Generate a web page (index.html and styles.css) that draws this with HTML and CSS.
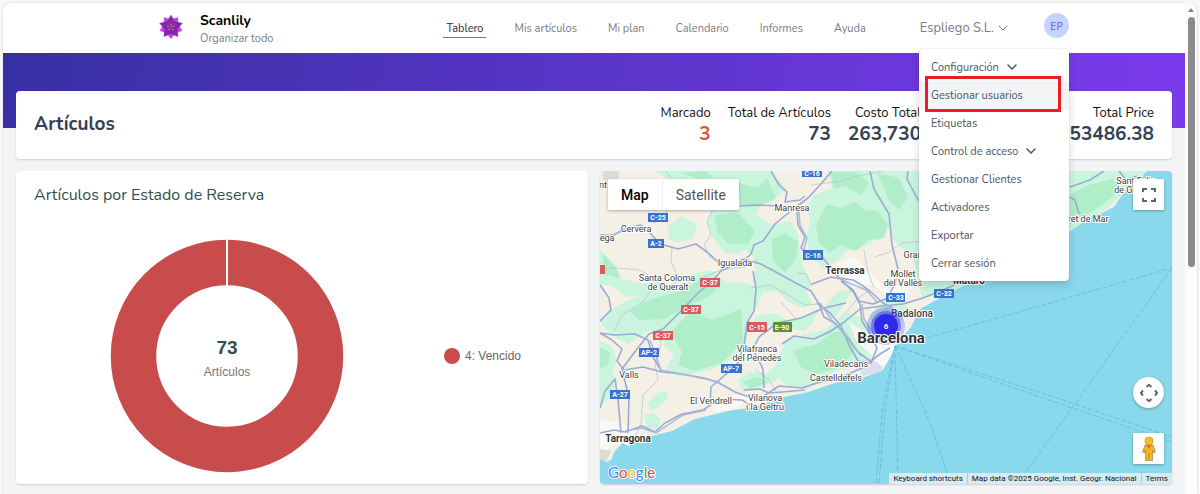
FILE: index.html
```html
<!DOCTYPE html>
<html lang="es">
<head>
<meta charset="utf-8">
<meta name="viewport" content="width=device-width, initial-scale=1">
<title>Scanlily</title>
<link rel="stylesheet" href="styles.css">
</head>
<body>
<div class="frame">
  <div class="page">
    <header class="topbar">
      <a class="brand" href="#">
        <svg class="brand-logo" viewBox="-12 -12 24 24" aria-hidden="true">
          <g fill="#c840f5">
            <path d="M0 12 L-4 7 L-2 0 L2 0 L4 7Z"/>
            <path d="M0 12 L-4 7 L-2 0 L2 0 L4 7Z" transform="rotate(72)"/>
            <path d="M0 12 L-4 7 L-2 0 L2 0 L4 7Z" transform="rotate(144)"/>
            <path d="M0 12 L-4 7 L-2 0 L2 0 L4 7Z" transform="rotate(216)"/>
            <path d="M0 12 L-4 7 L-2 0 L2 0 L4 7Z" transform="rotate(288)"/>
          </g>
          <g fill="#8128a8" stroke="#9331ba" stroke-width=".3">
            <path d="M0 -12 L-4 -5.500 L-2 0 L2 0 L4 -5.500Z"/>
            <path d="M0 -12 L-4 -5.500 L-2 0 L2 0 L4 -5.500Z" transform="rotate(72)"/>
            <path d="M0 -12 L-4 -5.500 L-2 0 L2 0 L4 -5.500Z" transform="rotate(144)"/>
            <path d="M0 -12 L-4 -5.500 L-2 0 L2 0 L4 -5.500Z" transform="rotate(216)"/>
            <path d="M0 -12 L-4 -5.500 L-2 0 L2 0 L4 -5.500Z" transform="rotate(288)"/>
          </g>
          <path d="M0 0V-3M0 0L3 -1M0 0L2 2.500M0 0L-2 2.500M0 0L-3 -1" stroke="#c76a86" stroke-width=".4"/>
          <g fill="#f7c64a"><circle cy="-3" r=".6"/><circle cx="3" cy="-1" r=".6"/><circle cx="2" cy="2.500" r=".6"/><circle cx="-2" cy="2.500" r=".6"/><circle cx="-3" cy="-1" r=".6"/></g>
        </svg>
        <span class="brand-text"><strong>Scanlily</strong><small>Organizar todo</small></span>
      </a>
      <nav class="nav">
        <a class="nav-link is-active" href="#">Tablero</a>
        <a class="nav-link" href="#">Mis artículos</a>
        <a class="nav-link" href="#">Mi plan</a>
        <a class="nav-link" href="#">Calendario</a>
        <a class="nav-link" href="#">Informes</a>
        <a class="nav-link" href="#">Ayuda</a>
      </nav>
      <div class="account">
        <button class="account-btn" type="button">Espliego S.L.
          <svg class="chev" viewBox="0 0 10 6" aria-hidden="true"><path d="M1 1l4 4 4-4"/></svg>
        </button>
        <button class="avatar" type="button">EP</button>
        <div class="menu">
          <button class="menu-item" type="button">Configuración
            <svg class="chev" viewBox="0 0 10 6" aria-hidden="true"><path d="M1 1l4 4 4-4"/></svg></button>
          <a class="menu-item is-hover" href="#">Gestionar usuarios</a>
          <a class="menu-item" href="#">Etiquetas</a>
          <button class="menu-item" type="button">Control de acceso
            <svg class="chev" viewBox="0 0 10 6" aria-hidden="true"><path d="M1 1l4 4 4-4"/></svg></button>
          <a class="menu-item" href="#">Gestionar Clientes</a>
          <a class="menu-item" href="#">Activadores</a>
          <a class="menu-item" href="#">Exportar</a>
          <a class="menu-item" href="#">Cerrar sesión</a>
          <div class="highlight"></div>
        </div>
      </div>
    </header>
    <div class="band"></div>
    <main class="content">
      <section class="card summary">
        <h1 class="summary-title">Artículos</h1>
        <dl class="stats">
          <div class="stat"><dt>Marcado</dt><dd class="is-red">3</dd></div>
          <div class="stat"><dt>Total de Artículos</dt><dd>73</dd></div>
          <div class="stat"><dt>Costo Total</dt><dd>263,730</dd></div>
          <div class="stat stat-last"><dt>Total Price</dt><dd>153486.38</dd></div>
        </dl>
      </section>
      <div class="panels">
        <section class="card chart">
          <h2 class="chart-title">Artículos por Estado de Reserva</h2>
          <div class="chart-body">
            <svg class="donut" viewBox="0 0 234 234" role="img" aria-label="73 Artículos">
              <circle cx="117" cy="117" r="93.500" fill="none" stroke="#c74c4b" stroke-width="45.500"/>
              <path d="M117 0V48" stroke="#fff" stroke-width="2"/>
              <text class="donut-num" x="117" y="115">73</text>
              <text class="donut-label" x="117" y="137">Artículos</text>
            </svg>
            <div class="legend"><span class="dot"></span>4: Vencido</div>
          </div>
        </section>
        <section class="card map">
          <svg class="map-svg" viewBox="600 172 572 313" preserveAspectRatio="xMidYMid slice">
            <rect x="600" y="172" width="572" height="313" fill="#8ad8eb"/>
            <clipPath id="land"><path d="M600 172H1147L1142 178L1134 184L1122 196L1114 208L1102 214L1090 218L1072 231L1040 252L1010 270L987 280L963 287L940 299L920 310L911 328L902 338L895 348L888 362L883 371L876 374L865 378L835 384L805 394L788 397L755 408L728 412L695 420L672 432L652 437L638 442L629 447L622 444L615 452L611 461L607 463L600 460Z"/></clipPath>
            <g clip-path="url(#land)">
              <rect x="600" y="172" width="572" height="313" fill="#f5f0e6"/>
              <g fill="#c9f4de">
                <path d="M655 172L770 172L780 182L786 190L774 201L762 206L755 215L772 226L790 222L798 235L800 252L803 268L812 285L806 292L792 290L772 280L757 273L752 256L744 251L737 256L724 253L713 239L708 224L711 212L740 211L739 181L668 180Z"/>
                <path d="M828 172H1147L1130 188L1106 210L1065 235L1020 270L968 288L922 300L914 262L893 240L890 226L883 240L873 242L862 249L846 252L838 262L824 270L812 258L806 238L810 224L807 208L814 196L832 189Z"/>
                <path d="M668 227L682 217L697 226L693 239L678 244L669 240Z"/>
                <path d="M600 251L612 262L622 280L644 285L660 279L670 289L650 296L627 298L610 286L600 287Z"/>
                <path d="M607 314L624 303L640 297L663 291L680 285L690 276L711 271L727 284L744 283L757 288L755 303L750 317L746 347L735 359L712 370L680 378L666 370L674 356L664 347L667 331L646 333L628 345L611 336L600 323Z"/>
                <path d="M755 260L771 272L789 284L806 292L813 305L803 309L789 303L777 292L763 293L755 312Z"/>
                <path d="M755 318L775 314L788 322L804 318L820 309L813 323L804 332L788 329L772 327L755 327Z"/>
                <path d="M600 342L612 347L617 362L612 372L618 383L608 400L600 409Z"/>
                <path d="M647 404L656 395L665 391L668 399L660 407L652 412ZM644 416L654 414L661 420L658 430L647 429Z"/>
                <path d="M738 381L749 373L767 374L775 367L786 342L803 336L826 330L845 313L863 319L874 332L866 345L876 356L853 367L826 376L807 390L788 388L779 380L762 388L743 393Z"/>
                <path d="M870 316L880 305L892 301L902 304L911 311L906 325L893 333L876 334ZM925 296L936 283L951 278L970 279L958 288L936 298ZM826 306L837 293L852 291L845 304L838 315L829 321Z"/>
              </g>
              <g fill="#b0edc9">
                <path d="M680 174L704 172L714 178L700 180ZM739 184L758 189L767 179L776 199L758 208L740 207Z"/>
                <path d="M816 226L827 205L841 209L855 203L864 211L878 212L888 226L883 239L868 241L856 252L841 246L829 254L819 243Z"/>
                <path d="M772 240L785 234L798 243L796 260L785 274L773 262ZM714 216L738 214L755 232L748 245L728 245L718 234Z"/>
                <path d="M831 173L856 173L869 184L861 196L845 187L834 190ZM877 174L899 179L908 198L899 211L889 201Z"/>
                <path d="M671 333L690 313L712 321L741 310L743 342L721 364L694 372L678 366L682 353Z"/>
                <path d="M630 312L651 300L684 291L706 277L720 286L707 299L689 306L664 320L639 321Z"/>
                <path d="M793 351L817 345L833 333L847 333L856 350L840 368L817 375L801 368Z"/>
                <path d="M600 348L611 354L607 367L600 369ZM743 383L758 378L768 383L750 390ZM1070 195L1089 186L1113 180L1120 191L1101 207L1070 225ZM603 255L616 268L620 279L603 275ZM871 322L887 308L896 319L887 330Z"/>
              </g>
              <g fill="#f8f8f6" opacity=".9">
                <path d="M837 264L854 258L872 276L889 291L912 281L905 304L886 295L872 286L854 289L845 279ZM848 322L865 333L882 337L900 323L909 312L903 338L890 361L880 370L872 357L857 343ZM713 404L735 396L755 399L735 409L716 414ZM600 421L620 423L638 431L630 445L614 446L600 456Z"/>
              </g>
              <path d="M858 364L870 359L883 368L878 374L862 377Z" fill="#d9def0"/>
              <path d="M603 172H619V184L603 181ZM600 450L611 452L606 463L600 462Z" fill="#dcdcd4"/>
              <g class="minor">
                <path d="M665 172L673 180L668 210L660 222L653 224M713 210L707 222L711 236L704 246L710 258L721 265M672 249L671 263L678 278L673 287M600 270L617 269L640 271L653 279M614 332L622 316L643 303L651 291L671 286M701 279L721 271L745 268L758 261M659 330L661 346L655 366L658 381L643 396L641 424L634 440M811 186L835 183L858 177L883 172M875 258L889 253L902 244L925 242M751 289L770 286L790 297L805 306L819 305M781 303L796 320M864 251L868 273L874 289M755 370L770 382L776 392M847 313L856 301L871 290M812 287L806 275L798 274"/>
              </g>
              <g class="road">
                <path d="M600 236L612 237L626 229L641 226L650 234L660 245L678 250L696 245L707 253L718 263L730 266L744 260L761 265L774 272L794 283L811 292L819 305L824 318L836 325L848 339L858 353L870 362"/>
                <path d="M742 263L751 255L754 246L763 242L775 225L792 211L808 199L820 186L832 172"/>
                <path d="M771 172L779 186L787 193L785 203L800 201L805 197M755 206L780 207L796 211M740 207L755 206"/>
                <path d="M797 211L798 226L805 238L801 249L808 257L822 258L832 270L839 279L853 281L863 287L872 294L883 304L900 313"/>
                <path d="M870 172L874 190L889 215L892 246L898 270L895 284L888 299L873 305L859 302L853 291L841 282"/>
                <path d="M908 172L907 180L917 199L925 210L934 227"/>
                <path d="M812 285L831 278L841 280L854 294L860 305L862 322L869 333L877 349L871 364L858 362L849 346L841 327L830 314L817 304"/>
                <path d="M600 334L614 336L635 335L648 341L653 358L662 373L682 375L704 379L719 384L735 393L758 401L779 387L802 389L817 384L844 377L862 369L880 355L890 349"/>
                <path d="M662 373L643 368L624 371L617 362L622 350L612 341L600 334"/>
                <path d="M600 434L614 431L625 433L642 427L655 433L665 424L682 415L703 411L720 400L742 401L752 407"/>
                <path d="M628 434L629 399L622 370L637 350L649 335L663 330L678 315L696 296L713 281L721 272L733 266"/>
                <path d="M621 434L618 400L615 380L605 392L600 409M600 322L611 311L609 299L600 286"/>
                <path d="M710 406L711 388L725 376L738 364L744 347L747 324L754 312L756 290L753 272"/>
                <path d="M744 391L760 390L769 394L782 393L805 391M764 389L763 370L753 350L759 338L777 324L801 319L824 309L846 304"/>
                <path d="M782 345L794 337L814 340L829 333L843 324L860 310L882 307L903 305L923 299L950 288L966 280"/>
                <path d="M1070 188L1090 181L1104 172M1070 198L1075 201L1079 215M1119 172L1126 181L1137 177"/>
              </g>
              <g class="road-hi"><path d="M602 236L613 236L629 229M799 212L800 226L807 239L804 250L811 260M820 304L831 320L844 335L861 357M840 280L866 291L878 304M650 341L661 371L720 383M625 432L642 429L656 434L683 416L706 411M862 305L864 320L879 343"/></g>
            </g>
            <g fill="none" stroke="#66c3dc" stroke-width="1" stroke-dasharray="5 2">
              <path d="M895 347L882 412L876 485M895 347L885 412L879 485M895 347L898 485M895 347L929 421L951 485M895 347L1040 398L1172 443M895 347L1045 395L1172 438M920 341L1040 307L1172 269M1172 269L1080 398L1017 485"/>
            </g>
            <g class="shields">
              <g fill="#3973cf"><rect x="802" y="166" width="20" height="12"/><rect x="648" y="214" width="20" height="9"/><rect x="648" y="240" width="16" height="9"/><rect x="803" y="251" width="20" height="10"/><rect x="886" y="294" width="19" height="9"/><rect x="934" y="290" width="20" height="9"/><rect x="639" y="349" width="20" height="9"/><rect x="721" y="365" width="21" height="9"/><rect x="610" y="391" width="20" height="9"/></g>
              <g fill="#d95b60"><rect x="700" y="279" width="20" height="9"/><rect x="681" y="306" width="20" height="9"/><rect x="653" y="332" width="20" height="9"/><rect x="747" y="323" width="20" height="10"/><rect x="596" y="266" width="9" height="9"/></g>
              <rect x="773" y="323" width="19" height="10" fill="#598f35"/>
              <text x="812" y="177">C-16</text><text x="658" y="221">C-25</text><text x="656" y="247">A-2</text><text x="813" y="259">C-16</text><text x="896" y="301">C-33</text><text x="944" y="297">C-32</text><text x="649" y="356">AP-2</text><text x="731" y="372">AP-7</text><text x="620" y="398">A-27</text><text x="710" y="286">C-37</text><text x="691" y="313">C-37</text><text x="663" y="339">C-37</text><text x="757" y="331">C-15</text><text x="782" y="331">E-90</text>
            </g>
            <g class="places">
              <text x="603" y="189">nt</text><text x="636" y="233">Cervera</text><text x="607" y="242">ega</text>
              <text x="735" y="267">Igualada</text><text x="667" y="282">Santa Coloma</text><text x="668" y="291">de Queralt</text>
              <text x="792" y="212">Manresa</text><text x="924" y="259">Granollers</text><text x="903" y="278">Mollet</text><text x="903" y="287">del Vallès</text>
              <text class="mid" x="845" y="275">Terrassa</text><text class="mid" x="969" y="285">Mataró</text>
              <text class="semi" x="912" y="318">Badalona</text>
              <text x="757" y="353">Vilafranca</text><text x="757" y="362">del Penedès</text><text x="629" y="379">Valls</text>
              <text x="711" y="405">El Vendrell</text><text x="765" y="402">Vilanova</text><text x="765" y="411">i la Geltrú</text>
              <text x="846" y="368">Viladecans</text><text x="836" y="382">Castelldefels</text>
              <text class="mid" x="628" y="443">Tarragona</text>
              <text x="1136" y="185">Sant Feliu</text><text x="1135" y="194">de Guíxols</text><text x="1082" y="223">Lloret de Mar</text>
            </g>
            <g fill="#2f29f0"><circle cx="886" cy="327" r="19" opacity=".25"/><circle cx="886" cy="327" r="15" opacity=".45"/><circle cx="886" cy="327" r="12"/></g>
            <text class="cluster" x="886" y="330">6</text>
            <g class="places"><text class="big" x="891" y="344">Barcelona</text></g>
            <text class="google" x="608" y="479"><tspan fill="#4285f4">G</tspan><tspan fill="#ea4335">o</tspan><tspan fill="#fbbc05">o</tspan><tspan fill="#4285f4">g</tspan><tspan fill="#34a853">l</tspan><tspan fill="#ea4335">e</tspan></text>
          </svg>
          <div class="map-type"><button class="type-btn is-on" type="button">Map</button><button class="type-btn" type="button">Satellite</button></div>
          <button class="map-ctl map-full" type="button" aria-label="Pantalla completa"><svg viewBox="0 0 18 18" aria-hidden="true"><path d="M3 6V3h4M11 3h4v3M15 12v3h-4M7 15H3v-3"/></svg></button>
          <div class="map-side">
            <button class="map-ctl map-pan" type="button" aria-label="Mover mapa"><svg viewBox="0 0 18 18" aria-hidden="true"><path d="M6.500 3L9 .8 11.500 3M6.500 15L9 17.200 11.500 15M3 6.500L.8 9 3 11.500M15 6.500L17.200 9 15 11.500"/></svg></button>
            <button class="map-ctl map-man" type="button" aria-label="Street View"><svg viewBox="0 0 14 26" aria-hidden="true"><path d="M3 9H11L13.500 16L11.500 17L10.500 14V24.500H3.500V14L2.500 17L.5 16Z" fill="#f8b51c" stroke="#9a8461" stroke-width=".7"/><path d="M4 9H10L7 13Z" fill="#e5762b" stroke="none"/><circle cx="7" cy="5" r="4" fill="#fbbd24" stroke="#a58645" stroke-width=".6"/><path d="M7 17v7" stroke="#cc8222"/></svg></button>
          </div>
          <div class="map-legal"><button type="button">Keyboard shortcuts</button><span>Map data ©2025 Google, Inst. Geogr. Nacional</span><a href="#">Terms</a></div>
        </section>
      </div>
    </main>
  </div>
  <div class="scroll" aria-hidden="true"><span class="scroll-up"></span><span class="scroll-thumb"></span></div>
</div>
</body>
</html>
```
FILE: styles.css
```css
* { box-sizing: border-box; }
body { margin: 0; background: #f7f7f7; color: #111; font-family: Nunito, Lato, sans-serif; font-size: 11px; }
button { margin: 0; padding: 0; border: 0; background: none; font: inherit; color: inherit; cursor: pointer; }
a { color: inherit; text-decoration: none; }
h1, h2, dl, dd { margin: 0; }

.frame { display: flex; min-height: 100vh; padding: 3px 3px 0; }
.page { flex: 1; min-width: 0; background: #f3f4f6; border-radius: 8px 0 0 0; box-shadow: 0 0 2px #ccc; }

.topbar { display: flex; align-items: flex-start; justify-content: space-between; height: 50px; padding: 0 116px 0 156px; background: #fff; border-radius: 8px 0 0 0; }
.brand { display: flex; gap: 17px; padding-top: 9px; }
.brand-logo { width: 24px; height: 24px; margin-top: 3px; }
.brand-text { display: flex; flex-direction: column; }
.brand-text strong { color: #000; font-size: 14px; line-height: 18px; }
.brand-text small { color: #7b808a; font-size: 11px; line-height: 18px; }
.nav { display: flex; gap: 25px; padding: 17px 0 0 119px; color: #777d87; }
.nav-link { padding: 0 3px; line-height: 17px; border-bottom: 1px solid transparent; }
.nav-link.is-active { color: #1f2937; border-color: #6366f1; }
.account { position: relative; display: flex; gap: 36px; }
.account-btn { display: flex; align-items: center; gap: 4px; height: 50px; color: #777d87; font-size: 13px; }
.chev { width: 10px; height: 6px; fill: none; stroke: currentColor; stroke-width: 1; stroke-linecap: round; stroke-linejoin: round; }
.avatar { width: 25px; height: 25px; margin-top: 10px; border-radius: 50%; background: #c7d2fe; color: #6366f1; font: 11px "Open Sans", sans-serif; }
.menu { position: absolute; z-index: 2; top: 46px; right: 0; width: 150px; padding: 4px 0; background: #fff; border-radius: 4px; box-shadow: 0 4px 8px rgba(0, 0, 0, .15), 0 0 1px rgba(0, 0, 0, .3); color: #4b5563; }
.menu-item { display: flex; align-items: center; gap: 8px; width: 100%; height: 28px; padding: 0 12px; }
.menu-item .chev { stroke-width: 1.5; }
.menu-item.is-hover { background: #f3f4f6; }
.highlight { position: absolute; top: 27px; left: 6px; right: 8px; height: 36px; border: 3px solid #ed1c24; }

.band { height: 75px; background: linear-gradient(100deg, #3730a3, #7c3aed); }
.content { position: relative; margin-top: -37px; padding: 0 13px 9px; }
.card { background: #fff; border-radius: 4px; box-shadow: 0 1px 2px rgba(0, 0, 0, .15); }
.summary { display: flex; align-items: center; justify-content: space-between; height: 68px; padding: 0 18px 2px; }
.summary-title { color: #334155; font-size: 19px; font-weight: 700; }
.stats { display: flex; gap: 17px; text-align: right; }
.stat dt { font-size: 13px; line-height: 20px; }
.stat dd { color: #334155; font-size: 19px; font-weight: 700; line-height: 22px; }
.stat dd.is-red { color: #d65745; }
.stat-last { margin-left: 120px; }

.panels { display: grid; grid-template-columns: 1fr 1fr; gap: 12px; margin-top: 12px; }
.chart { height: 313px; padding: 14px 18px; }
.chart-title { color: #2f4f4f; font-size: 16px; font-weight: 400; line-height: 20px; }
.chart-body { display: flex; align-items: center; gap: 100px; padding: 34px 0 0 76px; }
.donut { width: 234px; height: 234px; }
.donut text { font-family: "Liberation Sans", Arial, sans-serif; text-anchor: middle; }
.donut-num { fill: #2f4f4f; font-size: 19px; font-weight: 700; }
.donut-label { fill: #757575; font-size: 12px; }
.legend { display: flex; align-items: center; gap: 5px; color: #666; font: 12px "Liberation Sans", Arial, sans-serif; }
.dot { width: 16px; height: 16px; border-radius: 50%; background: #c74c4b; }

.map { position: relative; height: 313px; overflow: hidden; font-family: Roboto, sans-serif; }
.map-svg { display: block; width: 100%; height: 100%; font-family: Roboto, sans-serif; }
.road { fill: none; stroke: #9aacd2; stroke-width: 1.6; stroke-linejoin: round; }
.road-hi { fill: none; stroke: #a9b8d9; stroke-width: 1.4; }
.minor { fill: none; stroke: #b9c4d8; stroke-width: .8; stroke-linejoin: round; }
.shields text { fill: #fff; font-size: 7px; font-weight: 700; text-anchor: middle; }
.places { fill: #3c4043; font-size: 9px; text-anchor: middle; stroke: #fff; stroke-width: 2px; stroke-linejoin: round; paint-order: stroke; }
.places .semi { font-size: 10px; font-weight: 500; }
.places .mid { fill: #333; font-size: 10px; font-weight: 700; }
.places .big { fill: #333; font-size: 15px; font-weight: 700; }
.cluster { fill: #fff; font-size: 8px; font-weight: 700; text-anchor: middle; }
.google { font-family: Lato, sans-serif; font-size: 15px; font-weight: 400; stroke: #fff; stroke-width: 2px; paint-order: stroke; }
.map-type { position: absolute; top: 8px; left: 8px; display: flex; background: #fff; border-radius: 1px; box-shadow: 0 1px 3px rgba(0, 0, 0, .3); }
.type-btn { height: 31px; padding: 0 13px; color: #565656; font-size: 14px; }
.type-btn.is-on { color: #000; font-weight: 500; border-right: 1px solid #eee; }
.map-ctl { display: grid; place-items: center; width: 31px; height: 31px; background: #fff; border-radius: 1px; box-shadow: 0 1px 3px rgba(0, 0, 0, .3); }
.map-ctl svg { width: 18px; height: 18px; fill: none; stroke: #666; stroke-width: 2; }
.map-full { position: absolute; top: 8px; right: 8px; }
.map-side { position: absolute; right: 8px; bottom: 20px; display: grid; gap: 25px; }
.map-pan { border-radius: 50%; }
.map-ctl.map-man svg { width: 14px; height: 26px; stroke-width: 1; }
.map-legal { position: absolute; right: 0; bottom: 0; display: flex; gap: 1px; color: #111; font-size: 8px; line-height: 11px; }
.map-legal > * { padding: 0 4px; background: #d6ecf2; }

.scroll { display: flex; flex-direction: column; align-items: center; gap: 5px; width: 12px; padding-top: 5px; background: #fcfcfc; border-radius: 0 8px 0 0; box-shadow: 1px 0 1px #e5e5e5; }
.scroll-up { border: 3px solid transparent; border-top-width: 0; border-bottom: 4px solid #858585; }
.scroll-thumb { width: 7px; height: 250px; border-radius: 4px; background: #8b8b8b; }
```
